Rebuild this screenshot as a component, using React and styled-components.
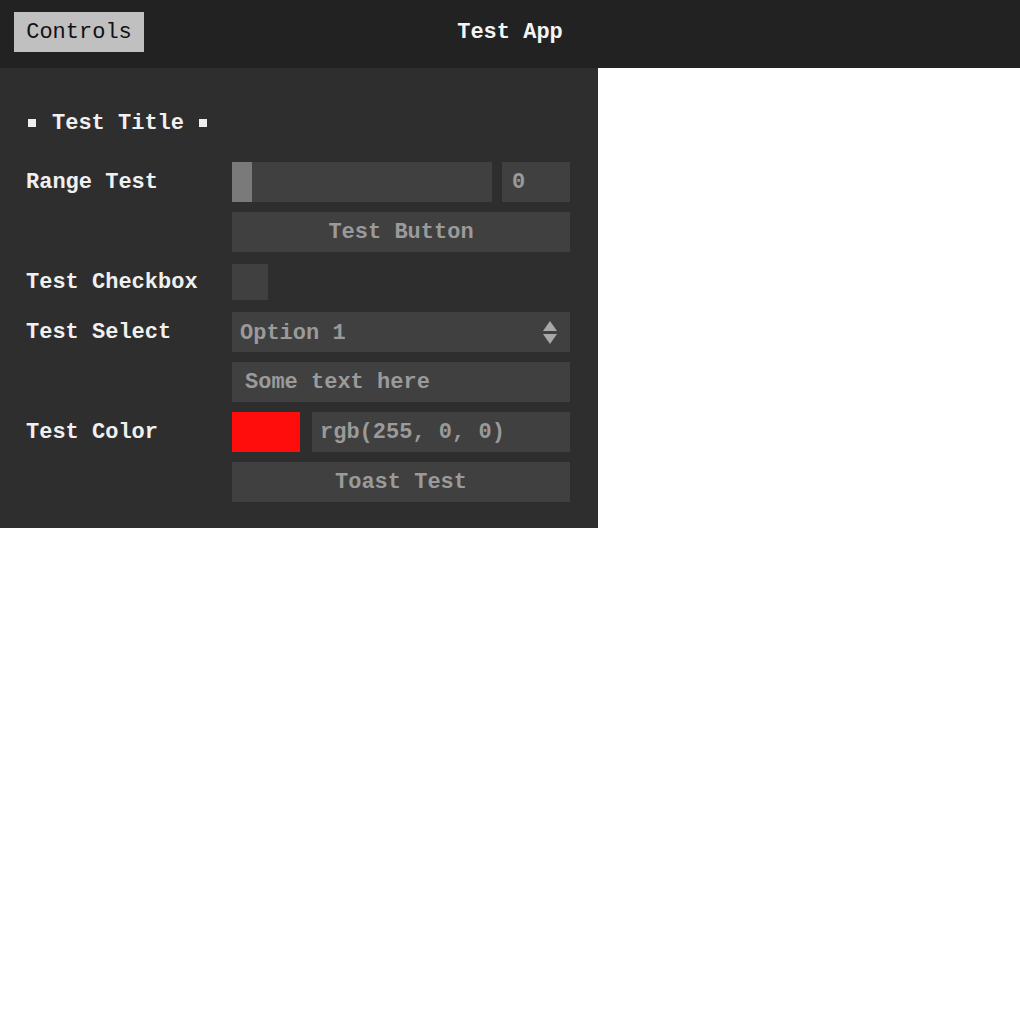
import React from 'react';
import styled, { createGlobalStyle } from 'styled-components';

const GlobalStyle = createGlobalStyle`
    body {
        margin: 0;
        background: #ffffff;
        font-family: "Liberation Mono", "Courier New", monospace;
    }
`;

const Header = styled.header`
    display: grid;
    grid-template-columns: 1fr auto 1fr;
    align-items: center;
    height: 68px;
    padding: 0 14px;
    box-sizing: border-box;
    background-color: #222222;
`;

const ControlsButton = styled.button`
    justify-self: start;
    margin-bottom: 4px;
    width: 130px;
    height: 40px;
    padding: 0;
    border: none;
    background-color: #c0c0c0;
    color: #111111;
    font-family: "Liberation Mono", "Courier New", monospace;
    font-size: 22px;
    cursor: pointer;
`;

const AppTitle = styled.h1`
    margin: 0 0 3px;
    color: #f4f4f4;
    font-size: 22px;
    font-weight: bold;
`;

const Panel = styled.section`
    width: 598px;
    box-sizing: border-box;
    padding: 26px 28px 26px 26px;
    background-color: #2e2e2e;
    display: flex;
    flex-direction: column;
    gap: 10px;
`;

const Title = styled.h2`
    display: flex;
    align-items: center;
    height: 58px;
    margin: 0;
    color: #f0f0f0;
    font-size: 22px;
    font-weight: bold;

    &::before,
    &::after {
        content: '';
        width: 8px;
        height: 8px;
        background-color: #eeeeee;
    }
    &::before {
        margin: 0 16px 0 2px;
    }
    &::after {
        margin-left: 15px;
    }
`;

const Row = styled.div`
    display: grid;
    grid-template-columns: 206px 338px;
    align-items: center;
    min-height: 40px;
`;

const Label = styled.label`
    color: #f0f0f0;
    font-size: 22px;
    font-weight: bold;
    white-space: nowrap;
`;

const Pair = styled.div`
    display: grid;
    grid-template-columns: ${(p) => p.$cols};
    gap: ${(p) => p.$gap};
    height: 40px;
`;

const field = `
    box-sizing: border-box;
    height: 40px;
    margin: 0;
    border: none;
    outline: none;
    background-color: #404040;
    color: #9a9a9a;
    font-family: "Liberation Mono", "Courier New", monospace;
    font-size: 22px;
    font-weight: bold;
`;

const Range = styled.input`
    ${field}
    appearance: none;
    -webkit-appearance: none;
    width: 100%;
    padding: 0;

    &::-webkit-slider-runnable-track {
        height: 40px;
        background: transparent;
    }
    &::-webkit-slider-thumb {
        -webkit-appearance: none;
        width: 20px;
        height: 40px;
        border: none;
        background-color: #7a7a7a;
    }
`;

const TextInput = styled.input`
    ${field}
    width: 100%;
    padding: 0 0 0 ${(p) => p.$pad || '9px'};
`;

const Button = styled.button`
    ${field}
    width: 100%;
    padding: 0;
    cursor: pointer;
`;

const Checkbox = styled.input`
    ${field}
    appearance: none;
    -webkit-appearance: none;
    width: 36px;
    height: 36px;
`;

const SelectWrap = styled.div`
    position: relative;
    height: 40px;
`;

const Select = styled.select`
    ${field}
    appearance: none;
    -webkit-appearance: none;
    width: 100%;
    padding: 2px 0 0 8px;
`;

const Arrows = styled.svg`
    position: absolute;
    right: 13px;
    top: 9px;
    pointer-events: none;
`;

const Swatch = styled.div`
    height: 40px;
    background-color: ${(p) => p.$color};
`;

export default function App() {
    return (
        <>
            <GlobalStyle />
            <Header>
                <ControlsButton>Controls</ControlsButton>
                <AppTitle>Test App</AppTitle>
                <span />
            </Header>
            <Panel>
                <Title>Test Title</Title>
                <Row>
                    <Label>Range Test</Label>
                    <Pair $cols="260px 68px" $gap="10px">
                        <Range type="range" min="0" max="100" defaultValue="0" />
                        <TextInput defaultValue="0" $pad="10px" />
                    </Pair>
                </Row>
                <Row>
                    <span />
                    <Button>Test Button</Button>
                </Row>
                <Row>
                    <Label>Test Checkbox</Label>
                    <Checkbox type="checkbox" />
                </Row>
                <Row>
                    <Label>Test Select</Label>
                    <SelectWrap>
                        <Select defaultValue="1">
                            <option value="1">Option 1</option>
                            <option value="2">Option 2</option>
                        </Select>
                        <Arrows width="14" height="23" viewBox="0 0 14 23">
                            <path d="M7 0 L14 10 L0 10 Z" fill="#a8a8a8" />
                            <path d="M0 13 L14 13 L7 23 Z" fill="#a8a8a8" />
                        </Arrows>
                    </SelectWrap>
                </Row>
                <Row>
                    <span />
                    <TextInput defaultValue="Some text here" $pad="13px" />
                </Row>
                <Row>
                    <Label>Test Color</Label>
                    <Pair $cols="68px 258px" $gap="12px">
                        <Swatch $color="#ff0d0d" />
                        <TextInput defaultValue="rgb(255, 0, 0)" $pad="8px" />
                    </Pair>
                </Row>
                <Row>
                    <span />
                    <Button>Toast Test</Button>
                </Row>
            </Panel>
        </>
    );
}
